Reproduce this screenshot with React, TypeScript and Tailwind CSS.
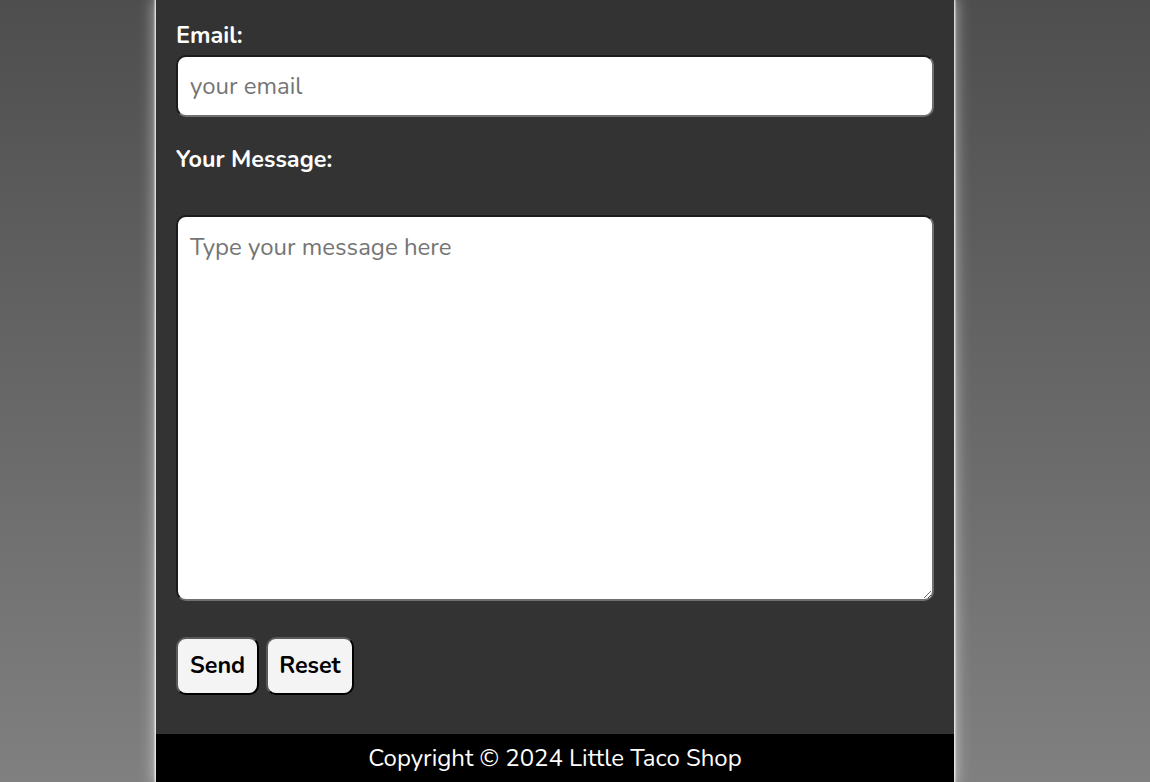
import React from 'react';

const font = { fontFamily: 'Nunito, Lato, "Open Sans", sans-serif' };

export default function App() {
    return (
        <div
            className="min-h-[782px] w-full bg-[linear-gradient(to_bottom,#4e4e4e,#808080)] overflow-hidden"
            style={font}
        >
            <div className="ml-[156px] w-[798px] bg-[#333333] shadow-[0_0_2px_1px_#ffffff,0_0_14px_2px_rgba(255,255,255,0.55)] flex flex-col">
                <form className="flex flex-col px-5 pt-[21px] pb-[39px]">
                    {/* Email */}
                    <label className="text-[23.4px] leading-[29px] font-bold text-white">Email:</label>
                    <input
                        type="email"
                        placeholder="your email"
                        className="mt-[5px] h-[62px] w-full rounded-[10px] bg-white px-[12px] text-[24px] text-black placeholder:text-[#757575] border-2 border-t-[#1c1c1c] border-l-[#1c1c1c] border-b-[#707070] border-r-[#707070] outline-none"
                    />

                    {/* Message */}
                    <label className="mt-[28px] text-[23.4px] leading-[29px] font-bold text-white">Your Message:</label>
                    <textarea
                        placeholder="Type your message here"
                        className="mt-[41px] h-[386px] w-full rounded-[10px] bg-white px-[12px] py-[15px] text-[24px] leading-[30px] text-black placeholder:text-[#757575] border-2 border-t-[#1c1c1c] border-l-[#1c1c1c] border-b-[#707070] border-r-[#707070] outline-none"
                    />

                    {/* Buttons */}
                    <div className="mt-[36px] flex gap-[7px]">
                        <button
                            type="button"
                            className="h-[58px] px-[12px] rounded-[10px] bg-[#f4f4f4] text-[23.4px] font-bold text-black border-2 border-t-[#5a5a5a] border-l-[#5a5a5a] border-b-black border-r-black"
                        >
                            Send
                        </button>
                        <button
                            type="reset"
                            className="h-[58px] px-[11px] rounded-[10px] bg-[#f4f4f4] text-[23.4px] font-bold text-black border-2 border-t-[#5a5a5a] border-l-[#5a5a5a] border-b-black border-r-black"
                        >
                            Reset
                        </button>
                    </div>
                </form>

                <footer className="h-[48px] bg-black flex items-center justify-center">
                    <p className="text-[24px] text-white">Copyright © 2024 Little Taco Shop</p>
                </footer>
            </div>
        </div>
    );
}
